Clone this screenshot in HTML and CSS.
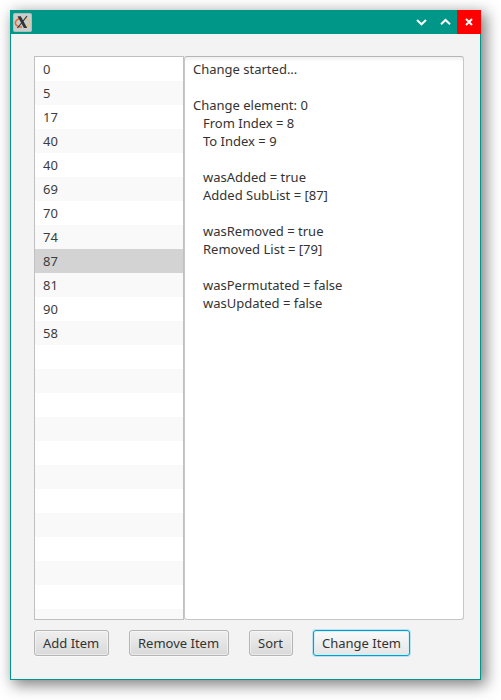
FILE: index.html
```
<!DOCTYPE html>
<html lang="en">
<head>
<meta charset="utf-8">
<title>List changes</title>
<link rel="stylesheet" href="styles.css">
</head>
<body>
<main class="window">
  <header class="titlebar">
    <svg class="app-icon" viewBox="0 0 19 19" aria-hidden="true">
      <rect x=".5" y=".5" width="18" height="18" rx="1" fill="#c9cdcc" stroke="#aebfba"/>
      <path d="M6.500 5.500C3 6.800 1.600 9.200 2.700 11.300c.9 1.700 3.300 2.700 6.300 2.700" fill="none" stroke="#f2642c" stroke-width="1.500"/>
      <path d="M11.500 5.200c3.600.5 5.700 2.800 5.200 5.100-.4 1.900-2.300 3-4.500 3.500" fill="none" stroke="#f0c07a" stroke-width="1.400"/>
      <path d="M4.500 3.200h3.300l6.400 11.800h-3.300z" fill="#303638"/>
      <path d="M14 3.200L4.500 15" fill="none" stroke="#303638" stroke-width="1.100"/>
    </svg>
    <div class="controls">
      <svg class="control" viewBox="0 0 24 24"><path d="M8 10l4.500 4.300L17 10"/></svg>
      <svg class="control" viewBox="0 0 24 24"><path d="M8 14.300l4.500-4.300 4.500 4.300"/></svg>
      <svg class="control close" viewBox="0 0 24 24"><path d="M9 9l6 6M15 9l-6 6"/></svg>
    </div>
  </header>
  <div class="content">
    <div class="panes">
      <ul class="list">
        <li>0</li><li>5</li><li>17</li><li>40</li><li>40</li><li>69</li><li>70</li><li>74</li><li class="selected">87</li><li>81</li><li>90</li><li>58</li>
        <li></li><li></li><li></li><li></li><li></li><li></li><li></li><li></li><li></li><li></li><li></li><li></li>
      </ul>
      <pre class="log">Change started...

Change element: 0
<span class="in">From Index = 8</span>
<span class="in">To Index = 9</span>

<span class="in">wasAdded = true</span>
<span class="in">Added SubList = [87]</span>

<span class="in">wasRemoved = true</span>
<span class="in">Removed List = [79]</span>

<span class="in">wasPermutated = false</span>
<span class="in">wasUpdated = false</span></pre>
    </div>
    <div class="actions">
      <button class="add">Add Item</button>
      <button class="remove">Remove Item</button>
      <button class="sort">Sort</button>
      <button class="change">Change Item</button>
    </div>
  </div>
</main>
</body>
</html>
```
FILE: styles.css
```
* { box-sizing: border-box; }
body {
  margin: 0;
  padding: 10px;
  height: 700px;
  overflow: hidden;
  background: #fff;
  font: 13px/18px "Noto Sans", sans-serif;
  color: #333;
}
.window {
  width: 471px;
  height: 670px;
  border: 1px solid #009688;
  border-top: 0;
  background: #f3f3f3;
  box-shadow: 4px 4px 14px 1px rgba(0, 0, 0, .5);
}
.titlebar {
  display: flex;
  justify-content: space-between;
  align-items: center;
  height: 24px;
  margin: 0 -1px;
  padding-left: 3px;
  background: #009688;
}
.app-icon { width: 19px; height: 19px; }
.controls { display: flex; }
.control {
  width: 24px;
  height: 24px;
  fill: none;
  stroke: #fff;
  stroke-width: 2;
}
.close { background: #f00; }
.content { padding: 22px 16px 23px 23px; }
.panes { display: flex; height: 564px; }
.list {
  width: 150px;
  margin: 0;
  padding: 0;
  list-style: none;
  overflow: hidden;
  border: 1px solid #c0c0c0;
  background: #fff;
}
.list li { height: 24px; padding: 3px 8px; color: #3c3c3c; }
.list li:nth-child(even) { background: #f9f9f9; }
.list li.selected { background: #d3d3d3; }
.log {
  width: 280px;
  margin: 0;
  padding: 3px 8px;
  border: 1px solid #c6c6c6;
  border-top-color: #b5b5b5;
  border-radius: 3px;
  background: linear-gradient(#f0f0f0, #fff 5px);
  font: inherit;
}
.in { padding-left: 10px; }
.actions { display: flex; gap: 20px; margin-top: 10px; }
button {
  height: 26px;
  padding: 0 0 0 8px;
  border: 1px solid #b5b5b5;
  border-radius: 3px;
  background: linear-gradient(#efefef, #d9d9d9);
  box-shadow: inset 0 0 0 1px rgba(255, 255, 255, .45), 0 1px #fafafa;
  font: inherit;
  color: #333;
  text-align: left;
  white-space: nowrap;
}
.add { width: 75px; }
.remove { width: 100px; }
.sort { width: 44px; }
.change {
  width: 97px;
  border-color: #039ed3;
  background: linear-gradient(#fafafa, #e5e5e5);
  box-shadow: inset 0 0 0 1px #d5eef6, 0 0 0 1px #b9e2ef;
}
```
